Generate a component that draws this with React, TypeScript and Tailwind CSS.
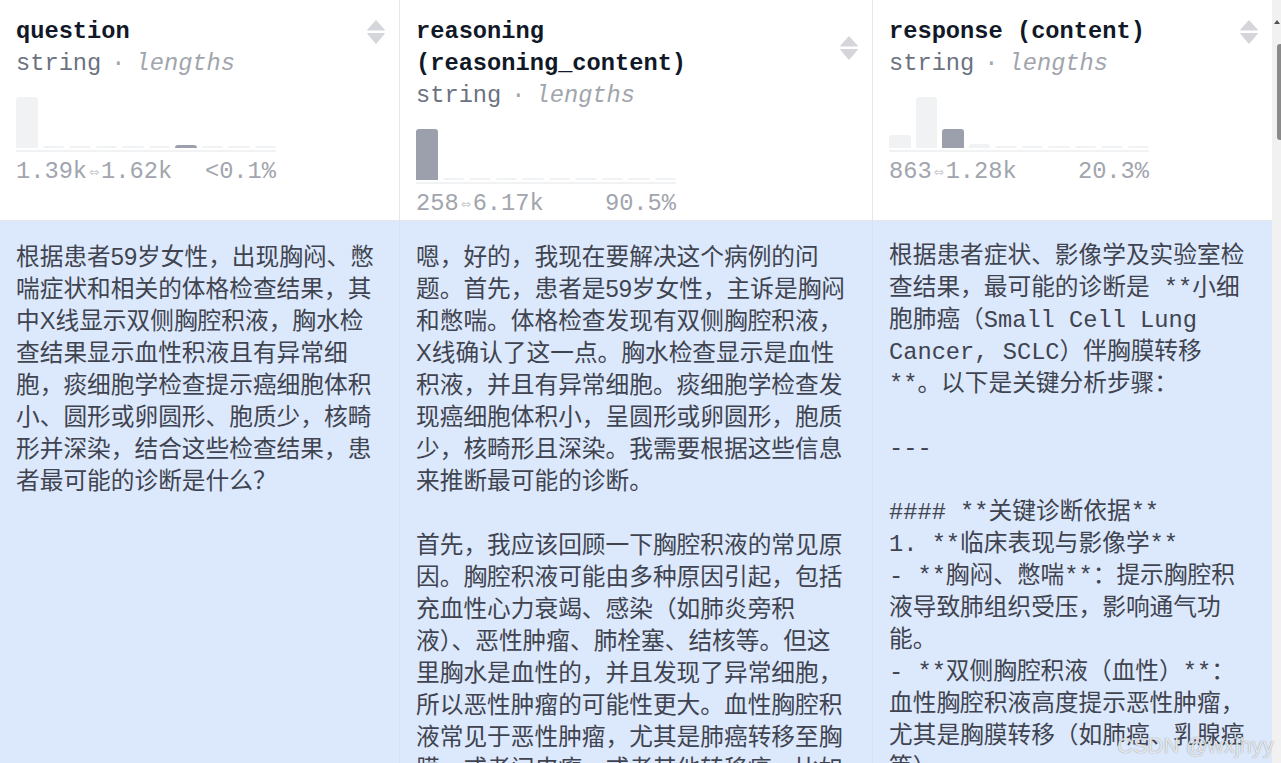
import React from "react";

type Col = {
  name: string[];
  min: string;
  max: string;
  pct: string;
  bars: number[];
  hi: number;
  mono: boolean;
  lines: string[];
};

const COLS: Col[] = [
  {
    name: ["question"],
    min: "1.39k",
    max: "1.62k",
    pct: "<0.1%",
    bars: [51, 2, 2, 2, 2, 2, 3, 2, 2, 2],
    hi: 6,
    mono: false,
    lines: [
      "根据患者59岁女性，出现胸闷、憋",
      "喘症状和相关的体格检查结果，其",
      "中X线显示双侧胸腔积液，胸水检",
      "查结果显示血性积液且有异常细",
      "胞，痰细胞学检查提示癌细胞体积",
      "小、圆形或卵圆形、胞质少，核畸",
      "形并深染，结合这些检查结果，患",
      "者最可能的诊断是什么？",
    ],
  },
  {
    name: ["reasoning", "(reasoning_content)"],
    min: "258",
    max: "6.17k",
    pct: "90.5%",
    bars: [51, 2, 2, 2, 2, 2, 2, 2, 2, 2],
    hi: 0,
    mono: false,
    lines: [
      "嗯，好的，我现在要解决这个病例的问",
      "题。首先，患者是59岁女性，主诉是胸闷",
      "和憋喘。体格检查发现有双侧胸腔积液，",
      "X线确认了这一点。胸水检查显示是血性",
      "积液，并且有异常细胞。痰细胞学检查发",
      "现癌细胞体积小，呈圆形或卵圆形，胞质",
      "少，核畸形且深染。我需要根据这些信息",
      "来推断最可能的诊断。",
      "",
      "首先，我应该回顾一下胸腔积液的常见原",
      "因。胸腔积液可能由多种原因引起，包括",
      "充血性心力衰竭、感染（如肺炎旁积",
      "液）、恶性肿瘤、肺栓塞、结核等。但这",
      "里胸水是血性的，并且发现了异常细胞，",
      "所以恶性肿瘤的可能性更大。血性胸腔积",
      "液常见于恶性肿瘤，尤其是肺癌转移至胸",
      "膜，或者间皮瘤，或者其他转移癌，比如",
    ],
  },
  {
    name: ["response (content)"],
    min: "863",
    max: "1.28k",
    pct: "20.3%",
    bars: [13, 51, 19, 4, 2, 2, 2, 2, 2, 2],
    hi: 2,
    mono: true,
    lines: [
      "根据患者症状、影像学及实验室检",
      "查结果，最可能的诊断是 **小细",
      "胞肺癌（Small Cell Lung",
      "Cancer, SCLC）伴胸膜转移",
      "**。以下是关键分析步骤：",
      "",
      "---",
      "",
      "#### **关键诊断依据**",
      "1. **临床表现与影像学**",
      "- **胸闷、憋喘**：提示胸腔积",
      "液导致肺组织受压，影响通气功",
      "能。",
      "- **双侧胸腔积液（血性）**：",
      "血性胸腔积液高度提示恶性肿瘤，",
      "尤其是胸膜转移（如肺癌、乳腺癌",
      "等）",
    ],
  },
];

const WIDTHS = ["w-[400px] border-r", "w-[473px] border-r", "w-[399px]"];

function SortIcon() {
  return (
    <svg width="18" height="24" viewBox="0 0 18 24" className="shrink-0">
      <path d="M9 0.5 L17.5 10 L0.5 10 Z" fill="#d4d6db" strokeLinejoin="round" stroke="#d4d6db" strokeWidth="1" />
      <path d="M0.5 13.5 L17.5 13.5 L9 23.5 Z" fill="#d4d6db" strokeLinejoin="round" stroke="#d4d6db" strokeWidth="1" />
    </svg>
  );
}

function Histogram({ col }: { col: Col }) {
  return (
    <div className="mt-[17px] w-[260px]">
      <div className="grid h-[51px] grid-cols-10 items-end gap-[5px]">
        {col.bars.map((h, i) => (
          <div
            key={i}
            className={`rounded-t-[3px] ${i === col.hi ? "bg-[#9ca0ac]" : "bg-[#f1f2f4]"}`}
            style={{ height: h }}
          />
        ))}
      </div>
      <div className="mt-[2px] h-[2px] bg-[#f1f2f4]" />
      <div className="mt-[4px] flex justify-between leading-8 text-[#a1a5ad]">
        <span className="flex items-center">
          {col.min}
          <span className="inline-block w-[14px] text-center font-['DejaVu_Sans',sans-serif] text-[12px] leading-none text-[#c9ccd2]">
            ⇔
          </span>
          {col.max}
        </span>
        <span>{col.pct}</span>
      </div>
    </div>
  );
}

export default function App() {
  return (
    <div className="relative h-[763px] w-[1281px] overflow-hidden bg-white font-['Liberation_Mono','Noto_Sans_CJK_SC',monospace] text-[23.7px]">
      <div className="flex h-full">
        <div className="flex w-[1272px] shrink-0 flex-col">
          {/* header row */}
          <div className="flex h-[221px] shrink-0 border-b border-[#e5e7eb] bg-white">
            {COLS.map((c, i) => (
              <div key={i} className={`${WIDTHS[i]} shrink-0 border-[#e5e7eb] pl-4 pr-[14px] pt-[16px]`}>
                <div className="flex items-center justify-between gap-3">
                  <div className="font-bold leading-8 text-[#111827]">
                    {c.name.map((n) => (
                      <div key={n} className="whitespace-pre">{n}</div>
                    ))}
                  </div>
                  <SortIcon />
                </div>
                <div className="whitespace-pre leading-8 text-[#6b7280]">
                  string
                  <span className="mx-[10px] text-[#a1a5ad]">·</span>
                  <span className="italic text-[#a1a5ad]">lengths</span>
                </div>
                <Histogram col={c} />
              </div>
            ))}
          </div>
          {/* first row */}
          <div className="flex flex-1 bg-[#dce8fb]">
            {COLS.map((c, i) => (
              <div
                key={i}
                className={`${WIDTHS[i]} shrink-0 border-[#d3e0f5] px-4 pt-[20px] text-[#3f4450] ${
                  c.mono
                    ? "font-['Liberation_Mono','Noto_Sans_CJK_SC',monospace]"
                    : "font-['Liberation_Sans','Noto_Sans_CJK_SC',sans-serif]"
                }`}
              >
                {c.lines.map((l, j) => (
                  <div key={j} className="h-8 whitespace-pre leading-8">
                    {l || "\u00a0"}
                  </div>
                ))}
              </div>
            ))}
          </div>
        </div>
        {/* scrollbar */}
        <div className="flex w-[9px] flex-col items-end bg-[#f1f1f1]">
          <div className="mr-[1px] mt-[20px] h-0 w-0 border-x-[3px] border-b-[4px] border-x-transparent border-b-[#505050]" />
          <div className="mt-[20px] h-[96px] w-[4px] rounded-l-[3px] bg-[#8a8a8a]" />
        </div>
      </div>
      <div className="absolute left-[1117px] top-[729px] font-['Liberation_Sans',sans-serif] text-[22px] text-white/80 [text-shadow:0_0_1px_rgba(0,0,0,0.5)]">
        CSDN @wxjhyy
      </div>
    </div>
  );
}
